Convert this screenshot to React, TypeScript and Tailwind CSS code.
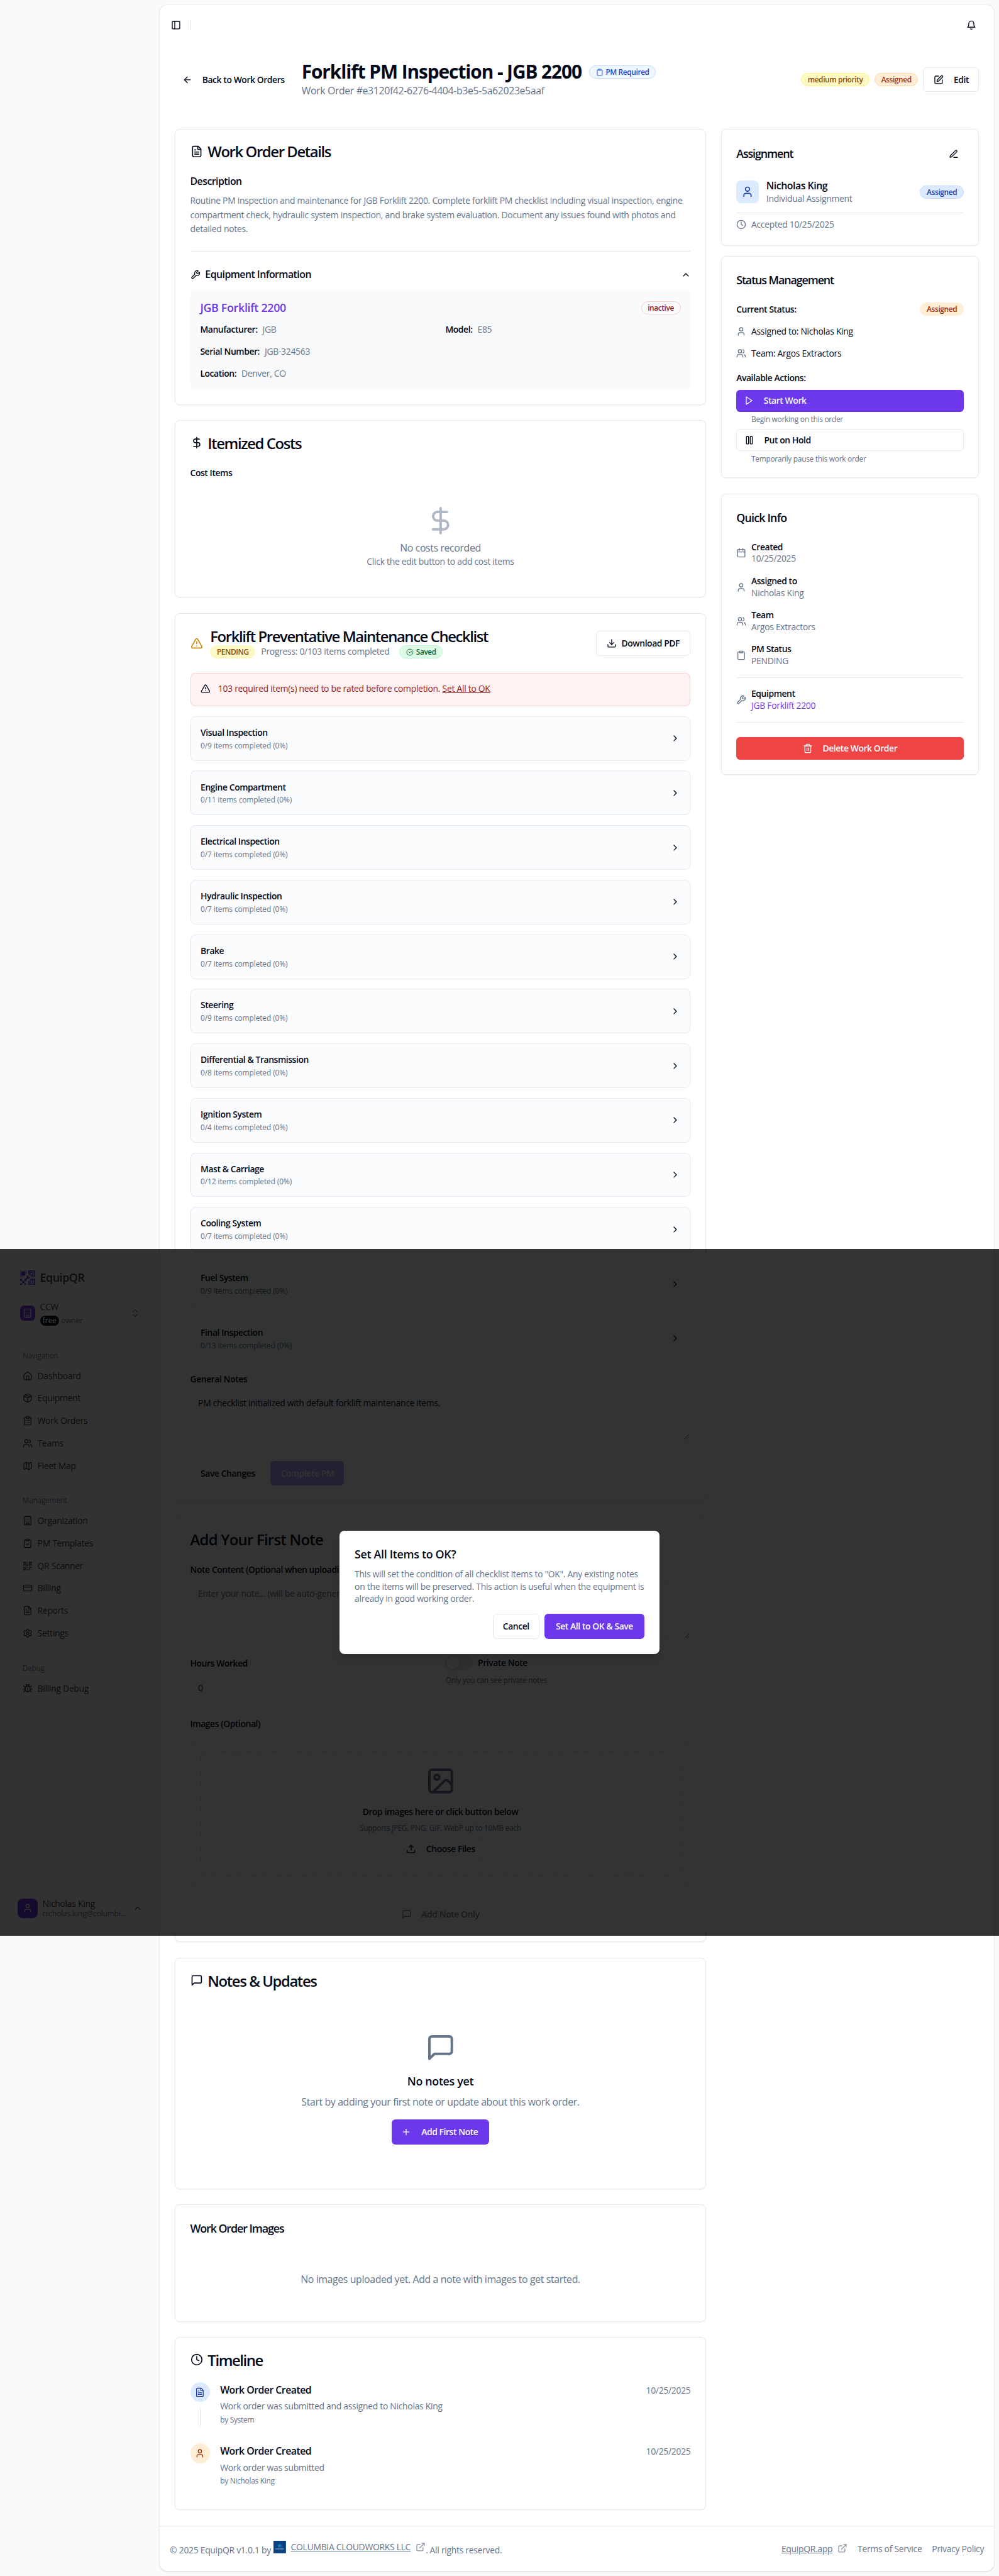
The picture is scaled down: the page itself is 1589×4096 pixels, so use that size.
import type { ReactNode } from "react";
import {
  ArrowLeft, Bug, Building, Calendar, ChevronRight, ChevronsUpDown, ChevronUp, CircleCheckBig, Clipboard,
  ClipboardCheck, ClipboardList, Clock, CreditCard, DollarSign, Download, ExternalLink, FileText, House,
  Image, Map, Package, PanelLeft, Pause, Plus, QrCode, Settings, SquarePen, Trash2, TriangleAlert, Upload,
  User, Users,
} from "lucide-react";

const T12 = "text-[12px] leading-[16px] tracking-[-0.023em]";
const T14 = "text-[14px] leading-[20px] tracking-[-0.02em]";
const T14B = "text-[14px] leading-[20px] font-semibold tracking-[-0.03em]";
const T16 = "text-[16px] leading-[24px] tracking-[-0.024em]";
const T16B = "text-[16px] leading-[24px] font-semibold tracking-[-0.034em]";
const T18B = "text-[18px] leading-[28px] font-semibold tracking-[-0.018em]";
const T18T = "text-[18px] leading-[28px] font-semibold tracking-[-0.061em]";
const T24 = "text-[24px] leading-[24px] font-semibold tracking-[-0.058em]";
const MUTED = "text-[#64748b]";
const LINE = "border-[#e6eaf0]";

type IconProps = { className?: string };

function Stroke({ className, children }: { className?: string; children: ReactNode }) {
  return (
    <svg
      viewBox="0 0 24 24"
      fill="none"
      stroke="currentColor"
      strokeWidth={2}
      strokeLinecap="round"
      strokeLinejoin="round"
      className={`shrink-0 ${className ?? "size-4"}`}
    >
      {children}
    </svg>
  );
}

const Bell = ({ className }: IconProps) => (
  <Stroke className={className}>
    <path d="M6 8a6 6 0 0 1 12 0c0 7 3 9 3 9H3s3-2 3-9" />
    <path d="M10.3 21a1.94 1.94 0 0 0 3.4 0" />
  </Stroke>
);

const Wrench = ({ className }: IconProps) => (
  <Stroke className={className}>
    <path d="M14.7 6.3a1 1 0 0 0 0 1.4l1.6 1.6a1 1 0 0 0 1.4 0l3.77-3.77a6 6 0 0 1-7.94 7.94l-6.91 6.91a2.12 2.12 0 0 1-3-3l6.91-6.91a6 6 0 0 1 7.94-7.94l-3.76 3.76z" />
  </Stroke>
);

const Message = ({ className }: IconProps) => (
  <Stroke className={className}>
    <path d="M21 15a2 2 0 0 1-2 2H7l-4 4V5a2 2 0 0 1 2-2h14a2 2 0 0 1 2 2z" />
  </Stroke>
);

const Play = ({ className }: IconProps) => (
  <Stroke className={className}>
    <polygon points="6 3 20 12 6 21 6 3" />
  </Stroke>
);

const Pen = ({ className }: IconProps) => (
  <Stroke className={className}>
    <path d="M12 20h9" />
    <path d="M16.376 3.622a1 1 0 0 1 3.002 3.002L7.368 18.635a2 2 0 0 1-.855.506l-2.872.838a.5.5 0 0 1-.62-.62l.838-2.872a2 2 0 0 1 .506-.854z" />
  </Stroke>
);

function BrandMark() {
  return (
    <svg viewBox="0 0 42 42" className="size-6 shrink-0" fill="#6d38eb">
      <path d="M0 0h18v10h-1V1H1v16h11v1H0z" />
      <path d="M3 3h12v9l-3 3H3z" />
      <path d="M23 0h19v18H30v-3h9V3H26v9l-3-2z" fillRule="evenodd" />
      <path d="M27 5h10v9H27zM29 7v5h6V7z" fillRule="evenodd" />
      <path d="M0 24h6v6H0zM12 24l5 1v5h-5zM6 30h6v6H6zM0 36h6v6H0zM12 36h5v6h-5z" />
      <path d="M28 23h14v19H23V30h3v9h13V26H28z" />
      <path d="M27 27h4v4h-4zM33 27h4v4h-4zM27 33h4v4h-4zM33 33h4v4h-4z" />
      <path d="M13 25l6-6c-1-3 2-6 6-5l-3 4 2 2 4-2c0 4-3 6-6 5l-6 5c-2 1-4-1-3-3z" />
    </svg>
  );
}

function Badge({ className, children }: { className: string; children: ReactNode }) {
  return (
    <span className={`flex h-[21px] shrink-0 items-center gap-1 rounded-full border px-[9.7px] pt-px text-[12px] leading-[16px] font-semibold tracking-[-0.033em] whitespace-nowrap ${className}`}>
      {children}
    </span>
  );
}

const ORANGE = "border-[#fed7aa] bg-[#ffedd5] text-[#9a3412]";

function Card({ className, children }: { className: string; children: ReactNode }) {
  return (
    <section className={`rounded-lg border ${LINE} bg-white p-[23.6px] shadow-[0_1px_2px_0_rgb(0_0_0/0.05)] ${className}`}>
      {children}
    </section>
  );
}

function CardTitle({ icon, children }: { icon?: ReactNode; children: ReactNode }) {
  return (
    <h2 className={`flex h-6 items-center gap-2 ${T24}`}>
      {icon}
      <span className="pt-[3px]">{children}</span>
    </h2>
  );
}

const Divider = ({ className }: IconProps) => <div className={`h-px bg-[#e2e8f0] ${className}`} />;

const Grip = () => (
  <svg viewBox="0 0 10 10" className="absolute right-px bottom-px size-[9px]" stroke="#555" strokeWidth={1} fill="none">
    <path d="M1 9L9 1M5.500 9L9 5.500" />
  </svg>
);

function NavItem({ icon: Icon, label }: { icon: (p: IconProps) => ReactNode; label: string }) {
  return (
    <li className={`flex h-9 items-center gap-2 ${T14}`}>
      <Icon className="size-4" />
      {label}
    </li>
  );
}

const ic = (C: typeof House) => (p: IconProps) => <C {...p} />;

const NAVIGATION = [
  { icon: ic(House), label: "Dashboard" },
  { icon: ic(Package), label: "Equipment" },
  { icon: ic(ClipboardList), label: "Work Orders" },
  { icon: ic(Users), label: "Teams" },
  { icon: ic(Map), label: "Fleet Map" },
];

const MANAGEMENT = [
  { icon: ic(Building), label: "Organization" },
  { icon: ic(ClipboardCheck), label: "PM Templates" },
  { icon: ic(QrCode), label: "QR Scanner" },
  { icon: ic(CreditCard), label: "Billing" },
  { icon: ic(FileText), label: "Reports" },
  { icon: ic(Settings), label: "Settings" },
];

function Sidebar() {
  const label = `${T12} font-medium text-[#3f3f46]/70`;
  return (
    <aside className="flex w-[256px] shrink-0 flex-col pt-[2000px]">
      <div className="flex h-[1099.4px] flex-col pb-7 text-[#3f3f46]">
        <div className="mt-[33.6px] flex h-6 items-center gap-2 pl-8">
          <BrandMark />
          <span className="text-[18px] leading-[24px] font-semibold tracking-[-0.025em]">EquipQR</span>
        </div>
        <div className="mt-[24.6px] flex h-[41px] items-center gap-2 pr-8 pl-8">
          <span className="flex size-6 items-center justify-center rounded-md bg-[#6d38eb] text-[#f8fafc]">
            <Building className="size-4" />
          </span>
          <div className="flex-1">
            <div className={`${T14} font-medium`}>CCW</div>
            <div className="mt-1 flex h-4 items-center gap-1">
              <span className={`flex h-4 items-center rounded-full bg-[#0f172a] px-1 ${T12} font-semibold text-[#f8fafc]`}>free</span>
              <span className={`${T12} ${MUTED}`}>owner</span>
            </div>
          </div>
          <ChevronsUpDown className="size-4 opacity-60" />
        </div>
        <div className={`mt-10 pl-9 ${label}`}>Navigation</div>
        <ul className="mt-[5.5px] pl-9">
          {NAVIGATION.map((n) => <NavItem key={n.label} {...n} />)}
        </ul>
        <div className={`mt-[30.3px] pl-9 ${label}`}>Management</div>
        <ul className="mt-[6px] pl-9">
          {MANAGEMENT.map((n) => <NavItem key={n.label} {...n} />)}
        </ul>
        <div className={`mt-[30.4px] pl-9 ${label}`}>Debug</div>
        <ul className="mt-[5.8px] pl-9">
          <NavItem icon={ic(Bug)} label="Billing Debug" />
        </ul>
        <div className="mt-auto flex h-8 items-center gap-2 pr-7 pl-7">
          <span className="flex size-8 items-center justify-center rounded-lg bg-[#6d38eb] text-[#f8fafc]">
            <User className="size-4" />
          </span>
          <div className="flex-1">
            <div className="text-[14px] leading-[18px] font-medium tracking-[-0.02em]">Nicholas King</div>
            <div className="text-[12px] leading-[16px] tracking-[-0.012em] text-[#64748b]">nicholas.king@columbi...</div>
          </div>
          <ChevronUp className="size-4" />
        </div>
      </div>
    </aside>
  );
}

function Header() {
  return (
    <>
      <header className="flex h-16 items-center pr-4 pl-[18px]">
        <PanelLeft className="size-4" />
        <span className="ml-[14px] h-4 w-px bg-[#e2e8f0]" />
        <Bell className="mr-3 ml-auto size-4" />
      </header>
      <div className="mt-[25px] flex h-[61px] items-center px-6">
        <div className={`flex w-[203px] items-center gap-4 pl-3 ${T14B}`}>
          <ArrowLeft className="size-4" />
          Back to Work Orders
        </div>
        <div>
          <div className="flex items-center gap-3">
            <h1 className="pt-px text-[30px] leading-[35px] font-bold tracking-[-0.0353em]">Forklift PM Inspection - JGB 2200</h1>
            <Badge className="border-[#bfdbfe] bg-[#eff6ff] text-[#1d4ed8]">
              <Clipboard className="size-3" />
              PM Required
            </Badge>
          </div>
          <p className={`mt-px ${T16} ${MUTED}`}>Work Order #e3120f42-6276-4404-b3e5-5a62023e5aaf</p>
        </div>
        <div className="ml-auto flex items-center gap-2">
          <Badge className="border-[#fef08a] bg-[#fef9c3] text-[#854d0e]">medium priority</Badge>
          <Badge className={ORANGE}>Assigned</Badge>
          <button className={`flex h-10 w-[89.6px] items-center gap-4 rounded-md border ${LINE} pl-4 ${T14B}`}>
            <SquarePen className="size-4" />
            Edit
          </button>
        </div>
      </div>
    </>
  );
}

function Field({ name, value }: { name: string; value: string }) {
  return (
    <div className="flex gap-2">
      <span className={T14B}>{name}</span>
      <span className={`${T14} ${MUTED}`}>{value}</span>
    </div>
  );
}

function DetailsCard() {
  return (
    <Card className="h-[442px]">
      <CardTitle icon={<FileText className="size-5" />}>Work Order Details</CardTitle>
      <h3 className={`mt-[24.700px] ${T16B}`}>Description</h3>
      <p className={`mt-[7px] text-[14px] leading-[22.75px] tracking-[-0.02em] whitespace-nowrap ${MUTED}`}>
        Routine PM inspection and maintenance for JGB Forklift 2200. Complete forklift PM checklist including visual inspection, engine
        <br />
        compartment check, hydraulic system inspection, and brake system evaluation. Document any issues found with photos and
        <br />
        detailed notes.
      </p>
      <Divider className="mt-[23.600px]" />
      <div className="mt-[24.500px] flex h-6 items-center">
        <Wrench className="size-4" />
        <h3 className={`ml-2 pt-px ${T16B}`}>Equipment Information</h3>
        <ChevronUp className="ml-auto size-4" />
      </div>
      <div className="mt-[11.4px] h-[160.2px] rounded-lg bg-[#f9fafc] p-4">
        <div className="flex h-7 items-center justify-between">
          <span className={`pt-px ${T18B} text-[#6d38eb]`}>JGB Forklift 2200</span>
          <Badge className="border-[#fecaca] text-[#991b1b]">inactive</Badge>
        </div>
        <div className="mt-[10.9px] grid grid-cols-2 gap-x-4 gap-y-[15px]">
          <Field name="Manufacturer:" value="JGB" />
          <Field name="Model:" value="E85" />
          <Field name="Serial Number:" value="JGB-324563" />
          <span />
          <Field name="Location:" value="Denver, CO" />
        </div>
      </div>
    </Card>
  );
}

function CostsCard() {
  return (
    <Card className="h-[284.4px]">
      <CardTitle icon={<DollarSign className="size-5" />}>Itemized Costs</CardTitle>
      <h3 className={`mt-[25.9px] ${T14B}`}>Cost Items</h3>
      <div className={`mt-[42.4px] flex flex-col items-center ${MUTED}`}>
        <DollarSign className="size-12 opacity-50" />
        <p className="mt-[9.8px] text-[16px] leading-[22px] tracking-[-0.024em]">No costs recorded</p>
        <p className={T14}>Click the edit button to add cost items</p>
      </div>
    </Card>
  );
}

const SECTIONS: [string, number][] = [
  ["Visual Inspection", 9],
  ["Engine Compartment", 11],
  ["Electrical Inspection", 7],
  ["Hydraulic Inspection", 7],
  ["Brake", 7],
  ["Steering", 9],
  ["Differential & Transmission", 8],
  ["Ignition System", 4],
  ["Mast & Carriage", 12],
  ["Cooling System", 7],
  ["Fuel System", 9],
  ["Final Inspection", 13],
];

function ChecklistCard() {
  return (
    <Card className="h-[1422px]">
      <div className="flex h-12 items-center">
        <TriangleAlert className="size-5 text-[#ca8a04]" />
        <div className="ml-3">
          <h2 className="pt-[1.500px] text-[24px] leading-[24.500px] font-semibold tracking-[-0.058em]">Forklift Preventative Maintenance Checklist</h2>
          <div className="mt-px flex items-center">
            <Badge className="border-[#fef9c3] bg-[#fef9c3] text-[#854d0e]">PENDING</Badge>
            <span className={`ml-[9px] ${T14} ${MUTED}`}>Progress: 0/103 items completed</span>
            <Badge className="ml-4 border-[#bbf7d0] bg-[#dcfce7] text-[#166534]">
              <CircleCheckBig className="size-3" />
              Saved
            </Badge>
          </div>
        </div>
        <button className={`ml-auto flex h-10 w-[151.7px] items-center gap-2 rounded-md border ${LINE} pl-4 ${T14B}`}>
          <Download className="size-4" />
          Download PDF
        </button>
      </div>
      <div className="mt-[23.8px] flex h-[53px] items-center rounded-lg border border-[#fecaca] bg-[#fef2f2] pb-1 pl-[15.7px]">
        <TriangleAlert className="size-4" />
        <p className={`ml-3 ${T14} text-[#991b1b]`}>
          103 required item(s) need to be rated before completion. <span className="underline">Set All to OK</span>
        </p>
      </div>
      <div className="mt-4 flex flex-col gap-4">
        {SECTIONS.map(([name, count]) => (
          <div key={name} className={`flex h-[71.35px] items-center justify-between rounded-lg border ${LINE} bg-[#fbfcfe] px-[15.7px]`}>
            <div>
              <div className={T14B}>{name}</div>
              <div className={`mt-[3px] text-[12px] leading-[16px] font-medium tracking-[-0.008em] ${MUTED}`}>0/{count} items completed (0%)</div>
            </div>
            <ChevronRight className="size-4" />
          </div>
        ))}
      </div>
      <h3 className={`mt-[19px] ${T14B}`}>General Notes</h3>
      <div className={`relative mt-[9.7px] h-[79.500px] rounded-md border ${LINE} px-[11.7px] py-2 ${T14}`}>
        PM checklist initialized with default forklift maintenance items.
        <Grip />
      </div>
      <div className="mt-8 flex gap-2">
        <button className={`h-10 w-[120.6px] rounded-md border ${LINE} ${T14B}`}>Save Changes</button>
        <button className={`h-10 w-[118.1px] rounded-md bg-[#6d38eb] text-[#f8fafc] opacity-50 ${T14B}`}>Complete PM</button>
      </div>
    </Card>
  );
}

function NoteFormCard() {
  return (
    <Card className="h-[682px]">
      <CardTitle>
        <span className="tracking-[-0.03em]">Add Your First Note</span>
      </CardTitle>
      <h3 className={`mt-[26.8px] ${T14B}`}>Note Content (Optional when uploading images)</h3>
      <div className={`relative mt-[9.4px] h-[93.500px] rounded-md border ${LINE} px-[11.7px] py-2 ${T14} ${MUTED}`}>
        Enter your note... (will be auto-generated if images are uploaded)
        <Grip />
      </div>
      <div className="mt-[24.3px] grid grid-cols-2 gap-4">
        <div>
          <div className={`h-[24px] pt-[3px] ${T14B}`}>Hours Worked</div>
          <div className={`mt-[8.7px] flex h-10 items-center rounded-md border ${LINE} px-[11.7px] ${T14}`}>0</div>
        </div>
        <div>
          <div className="flex h-6 items-center gap-2">
            <span className="flex h-6 w-11 items-center rounded-full bg-[#e2e8f0] pl-0.5">
              <span className="size-5 rounded-full bg-white shadow-lg" />
            </span>
            <span className={T14B}>Private Note</span>
          </div>
          <p className={`mt-[8.6px] ${T12} ${MUTED}`}>Only you can see private notes</p>
        </div>
      </div>
      <h3 className={`mt-[26.500px] ${T14B}`}>Images (Optional)</h3>
      <div className={`mt-[17.3px] h-[234.4px] rounded-lg border ${LINE} p-[15.6px] shadow-[0_1px_2px_0_rgb(0_0_0/0.05)]`}>
        <div className="flex h-full flex-col items-center rounded-lg border-2 border-dashed border-[#d9dde3] pt-[23.3px]">
          <Image className="size-12 text-[#64748b]" />
          <p className={`mt-[15.6px] ${T14B}`}>Drop images here or click button below</p>
          <p className={`mt-[7.500px] ${T12} ${MUTED}`}>Supports JPEG, PNG, GIF, WebP up to 10MB each</p>
          <button className={`mt-[7.7px] flex h-9 w-[135.500px] items-center gap-4 rounded-md border ${LINE} pl-3 ${T14B}`}>
            <Upload className="size-4" />
            Choose Files
          </button>
        </div>
      </div>
      <button className={`mt-[24.500px] flex h-[39.500px] w-full items-center justify-center gap-4 rounded-md border ${LINE} opacity-50 ${T14B}`}>
        <Message />
        Add Note Only
      </button>
    </Card>
  );
}

function NotesCard() {
  return (
    <Card className="h-[371px]">
      <CardTitle icon={<Message className="size-5" />}>Notes &amp; Updates</CardTitle>
      <div className="mt-[71.500px] flex flex-col items-center">
        <Message className="size-12 text-[#64748b]" />
        <h3 className={`mt-[16.700px] ${T18B}`}>No notes yet</h3>
        <p className={`mt-[7.2px] ${T16} ${MUTED}`}>Start by adding your first note or update about this work order.</p>
        <button className={`mt-[15.2px] flex h-10 w-[157px] items-center gap-4 rounded-md bg-[#6d38eb] pl-4 text-[#f8fafc] ${T14B}`}>
          <Plus className="size-4" />
          Add First Note
        </button>
      </div>
    </Card>
  );
}

function TimelineEntry({ icon, tint, detail, by, last }: { icon: ReactNode; tint: string; detail: string; by: string; last?: boolean }) {
  return (
    <li className="flex h-[98.500px] gap-4">
      <div className="flex w-8 flex-col items-center">
        <span className={`flex size-8 items-center justify-center rounded-full ${tint}`}>{icon}</span>
        {!last && <span className="mt-2 h-8 w-px bg-[#e2e8f0]" />}
      </div>
      <div className="flex-1 pt-px">
        <div className="flex items-center justify-between">
          <span className={T16B}>Work Order Created</span>
          <span className={`${T14} ${MUTED}`}>10/25/2025</span>
        </div>
        <p className={`mt-[3.4px] ${T14} ${MUTED}`}>{detail}</p>
        <p className={`mt-1 ${T12} ${MUTED}`}>{by}</p>
      </div>
    </li>
  );
}

function QuickRow({ icon, label, value, link }: { icon: ReactNode; label: string; value: string; link?: boolean }) {
  return (
    <div className="flex h-[38px] items-center gap-2">
      <span className="text-[#64748b]">{icon}</span>
      <div className="text-[14px] leading-[19px]">
        <div className="font-semibold tracking-[-0.03em]">{label}</div>
        <div className={`tracking-[-0.02em] ${link ? "text-[#6d38eb]" : "text-[#64748b]"}`}>{value}</div>
      </div>
    </div>
  );
}

function RightColumn() {
  return (
    <div className="flex-1">
      <Card className="h-[187.500px]">
        <div className="flex h-8 items-center justify-between pr-2">
          <h2 className={`pt-px ${T18T}`}>Assignment</h2>
          <Pen className="size-4" />
        </div>
        <div className="mt-[24.9px] flex h-10 items-center">
          <span className="flex size-9 items-center justify-center rounded-lg bg-[#dbeafe] text-[#1e40af]">
            <User className="size-5" />
          </span>
          <div className="ml-3 pt-px">
            <div className="text-[16px] leading-[21px] font-semibold tracking-[-0.03em]">Nicholas King</div>
            <div className={`${T14} ${MUTED}`}>Individual Assignment</div>
          </div>
          <Badge className="ml-auto border-[#bfdbfe] bg-[#dbeafe] text-[#1e40af]">Assigned</Badge>
        </div>
        <Divider className="mt-[13.2px]" />
        <div className={`mt-[7.6px] flex items-center gap-2 ${T14} ${MUTED}`}>
          <Clock className="size-4" />
          Accepted 10/25/2025
        </div>
      </Card>
      <Card className="mt-4 h-[356.3px]">
        <h2 className={`pt-[0.700px] ${T18T}`}>Status Management</h2>
        <div className="mt-[21.800px] flex h-[21px] items-center justify-between">
          <span className={T14B}>Current Status:</span>
          <Badge className="border-[#ffedd5] bg-[#ffedd5] text-[#9a3412]">Assigned</Badge>
        </div>
        <div className={`mt-[15.3px] flex items-center gap-2 ${T14}`}>
          <User className="size-4 text-[#64748b]" />
          Assigned to: Nicholas King
        </div>
        <div className={`mt-[15.2px] flex items-center gap-2 ${T14}`}>
          <Users className="size-4 text-[#64748b]" />
          Team: Argos Extractors
        </div>
        <h3 className={`mt-[18.8px] ${T14B}`}>Available Actions:</h3>
        <button className={`mt-[9px] flex h-[35.600px] w-full items-center gap-4 rounded-md bg-[#6d38eb] pl-3 text-[#f8fafc] ${T14B}`}>
          <Play />
          Start Work
        </button>
        <p className={`mt-[4.4px] pl-6 ${T12} ${MUTED}`}>Begin working on this order</p>
        <button className={`mt-[7.2px] flex h-[35.500px] w-full items-center gap-4 rounded-md border ${LINE} pl-[11.6px] ${T14B}`}>
          <Pause className="size-4" />
          Put on Hold
        </button>
        <p className={`mt-[4.3px] pl-6 ${T12} ${MUTED}`}>Temporarily pause this work order</p>
      </Card>
      <Card className="mt-[24.4px] h-[450.3px]">
        <h2 className={`pt-[0.700px] ${T18T}`}>
          <span className="tracking-[-0.045em]">Quick Info</span>
        </h2>
        <div className="mt-[23.100px] flex flex-col gap-[16.6px]">
          <QuickRow icon={<Calendar className="size-4" />} label="Created" value="10/25/2025" />
          <QuickRow icon={<User className="size-4" />} label="Assigned to" value="Nicholas King" />
          <QuickRow icon={<Users className="size-4" />} label="Team" value="Argos Extractors" />
          <QuickRow icon={<Clipboard className="size-4" />} label="PM Status" value="PENDING" />
        </div>
        <Divider className="mt-4 mb-[16.3px]" />
        <QuickRow icon={<Wrench className="size-4" />} label="Equipment" value="JGB Forklift 2200" link />
        <Divider className="mt-4" />
        <button className={`mt-[23.9px] flex h-9 w-full items-center justify-center gap-4 rounded-md bg-[#ef4444] text-[#f8fafc] ${T14B}`}>
          <Trash2 className="size-4" />
          Delete Work Order
        </button>
      </Card>
    </div>
  );
}

function Footer() {
  return (
    <footer className={`mt-[24.600px] flex h-[73px] items-start rounded-b-xl border-t border-[#e2e8f0] px-4 ${T14} ${MUTED}`}>
      <span className="mt-[28.2px]">© 2025 EquipQR v1.0.1 by</span>
      <svg viewBox="0 0 20 20" className="mt-[23.2px] ml-1 size-5">
        <rect width="20" height="20" fill="#0b4180" />
        <g fill="#1795cf">
          <circle cx="10" cy="8" r="1.400" />
          <circle cx="10" cy="5.600" r="0.800" />
          <circle cx="10" cy="10.400" r="0.800" />
          <circle cx="7.900" cy="6.900" r="0.800" />
          <circle cx="12.100" cy="6.900" r="0.800" />
          <circle cx="7.900" cy="9.200" r="0.800" />
          <circle cx="12.100" cy="9.200" r="0.800" />
        </g>
        <path d="M3 13h14" stroke="#c8d6e6" strokeWidth="1" strokeDasharray="1.200 0.600" />
        <path d="M5 14.700h10" stroke="#4d7aa8" strokeWidth="0.500" />
      </svg>
      <a className="mt-[23.7px] ml-2 underline">COLUMBIA CLOUDWORKS LLC</a>
      <ExternalLink className="mt-[25.500px] ml-2 size-4 opacity-75" />
      <span className="mt-[28.2px]">. All rights reserved.</span>
      <a className="mt-[26.100px] ml-auto underline">EquipQR.app</a>
      <ExternalLink className="mt-[27.400px] ml-2 size-4 opacity-75" />
      <a className="mt-[26.100px] ml-4">Terms of Service</a>
      <a className="mt-[26.100px] ml-4">Privacy Policy</a>
    </footer>
  );
}

function ConfirmDialog() {
  return (
    <div className="absolute top-[2000px] left-0 flex h-[1099.4px] w-full items-center justify-center bg-black/80">
      <div className="h-[197px] w-[512px] rounded-lg bg-white p-6 shadow-lg">
        <h2 className={T18B}>Set All Items to OK?</h2>
        <p className={`mt-[7.3px] text-[14px] leading-[19.500px] tracking-[-0.02em] whitespace-nowrap ${MUTED}`}>
          This will set the condition of all checklist items to "OK". Any existing notes
          <br />
          on the items will be preserved. This action is useful when the equipment is
          <br />
          already in good working order.
        </p>
        <div className="mt-[15px] flex justify-end gap-2">
          <button className={`h-10 w-[75px] rounded-md border ${LINE} ${T14B}`}>Cancel</button>
          <button className={`h-10 w-[160px] rounded-md bg-[#6d38eb] text-[#f8fafc] ${T14B}`}>Set All to OK &amp; Save</button>
        </div>
      </div>
    </div>
  );
}

export default function App() {
  return (
    <div className="relative flex h-[4124px] w-[1600px] overflow-hidden bg-[#fafafa] font-['Open_Sans',sans-serif] text-[#020817] [zoom:0.993125]">
      <Sidebar />
      <main className="my-2 mr-2 flex h-[4108.600px] flex-1 flex-col rounded-xl bg-white shadow-[0_1px_3px_0_rgb(0_0_0/0.1),0_1px_2px_-1px_rgb(0_0_0/0.1)]">
        <Header />
        <div className="mt-12 flex items-start gap-6 px-6">
          <div className="flex w-[850.7px] shrink-0 flex-col gap-[24.45px]">
            <DetailsCard />
            <CostsCard />
            <ChecklistCard />
            <NoteFormCard />
            <NotesCard />
            <Card className="h-[187.700px]">
              <h2 className={`pt-[0.700px] ${T18T}`}>Work Order Images</h2>
              <p className={`mt-[55.200px] text-center ${T16} ${MUTED}`}>No images uploaded yet. Add a note with images to get started.</p>
            </Card>
            <Card className="h-[277.200px]">
              <CardTitle icon={<Clock className="size-5" />}>Timeline</CardTitle>
              <ul className="mt-[23.500px]">
                <TimelineEntry
                  icon={<FileText className="size-4" />}
                  tint="bg-[#dbeafe] text-[#1e40af]"
                  detail="Work order was submitted and assigned to Nicholas King"
                  by="by System"
                />
                <TimelineEntry
                  icon={<User className="size-4" />}
                  tint="bg-[#ffedd5] text-[#9a3412]"
                  detail="Work order was submitted"
                  by="by Nicholas King"
                  last
                />
              </ul>
            </Card>
          </div>
          <RightColumn />
        </div>
        <Footer />
      </main>
      <ConfirmDialog />
    </div>
  );
}
